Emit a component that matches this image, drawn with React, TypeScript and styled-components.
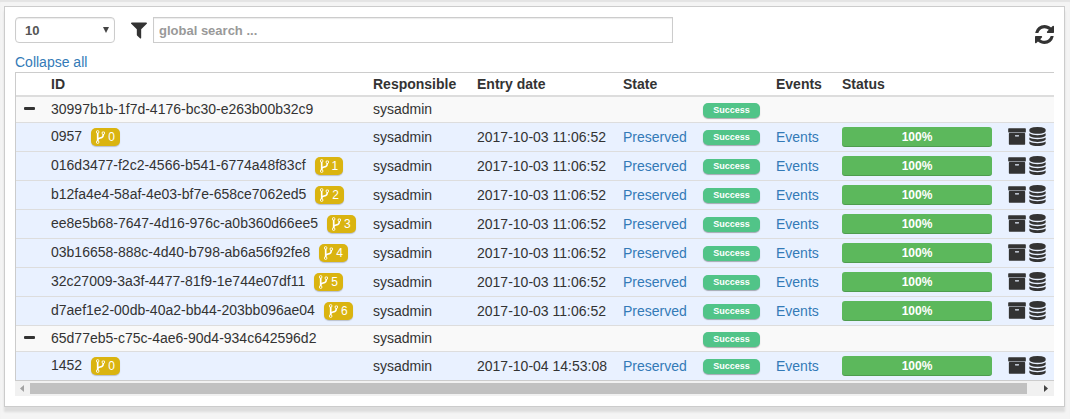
import React, { useState } from 'react';
import styled, { createGlobalStyle } from 'styled-components';

const GlobalStyle = createGlobalStyle`
  *, *::before, *::after { box-sizing: border-box; }
  body {
    margin: 0;
    background: #f4f4f4;
    color: #333;
    font-family: "Liberation Sans", Arial, sans-serif;
    font-size: 14px;
    line-height: 20px;
  }
`;

const Page = styled.div`
  padding: 6px 5px 12px 4px;
  box-shadow: inset 0 2px 1px #e4e4e4;
`;

const Panel = styled.main`
  padding: 10px;
  background: #fff;
  border: 1px solid #ccc;
  box-shadow: 0 5px 2px #ddd;
`;

const Toolbar = styled.div`
  display: flex;
  align-items: flex-start;
  height: 35px;
`;

const SelectBox = styled.div`
  position: relative;
  width: 100px;
  margin-right: 16px;
`;

const PageSize = styled.select`
  appearance: none;
  display: block;
  width: 100%;
  height: 26px;
  padding: 0 9px;
  border: 1px solid #ccc;
  border-radius: 4px;
  background: #fff;
  box-shadow: inset 0 1px 1px rgba(0, 0, 0, 0.08);
  color: #555;
  font: bold 13px "Liberation Sans", Arial, sans-serif;
`;

const SelectArrow = styled.svg`
  position: absolute;
  top: 10px;
  right: 6px;
  width: 6px;
  height: 6px;
  fill: #444;
  pointer-events: none;
`;

const SearchLabel = styled.label`
  width: 22px;
  padding-top: 5px;
`;

const Search = styled.input`
  flex: 0 0 50%;
  height: 26px;
  padding: 0 5px;
  border: 1px solid #ccc;
  border-radius: 0;
  background: #fff;
  box-shadow: inset 0 1px 1px rgba(0, 0, 0, 0.08);
  color: #555;
  font: bold 13px "Liberation Sans", Arial, sans-serif;
  &::placeholder { color: #999; opacity: 1; }
`;

const IconButton = styled.button`
  display: block;
  padding: 0;
  border: 0;
  background: none;
  color: #333;
  cursor: pointer;
`;

const Refresh = styled(IconButton)`
  margin: 8px 0 0 auto;
`;

const Icon = styled.svg`
  display: block;
  fill: currentColor;
`;

const Link = styled.a`
  color: #337ab7;
  text-decoration: none;
`;

const TableFrame = styled.div`
  border: 1px solid #ccc;
  border-right: 0;
  overflow: hidden;
`;

const Table = styled.table`
  width: 100%;
  border-spacing: 0;
  table-layout: fixed;
`;

const HeadCell = styled.th`
  height: 24px;
  padding: 0;
  border-bottom: 2px solid #ddd;
  text-align: left;
  white-space: nowrap;
`;

const Row = styled.tr<{ $group?: boolean }>`
  background: ${(p) => (p.$group ? '#f9f9f9' : '#e9f1ff')};
  & > td {
    height: ${(p) => (p.$group ? 26 : 29)}px;
    padding-bottom: ${(p) => (p.$group ? 2 : 0)}px;
  }
  &:first-child > td { height: 25px; border-top: 0; }
`;

const Cell = styled.td`
  padding: 0;
  border-top: 1px solid #ddd;
  white-space: nowrap;
`;

const IdLine = styled.div`
  display: flex;
  align-items: flex-end;
  gap: 9px;
  padding-bottom: 2px;
`;

const ForkTag = styled.span`
  display: inline-flex;
  align-items: center;
  gap: 3px;
  height: 18px;
  padding: 0 5px;
  border-radius: 5px;
  background: #dab410;
  box-shadow: 0 1px 1px rgba(0, 0, 0, 0.2);
  color: #fff;
  font-size: 12px;
  line-height: 18px;
`;

const SuccessTag = styled.span<{ $group?: boolean }>`
  display: block;
  width: 57px;
  margin-top: ${(p) => (p.$group ? 4 : 0)}px;
  border-radius: 5px;
  background: #51c488;
  box-shadow: 0 1px 1px rgba(0, 0, 0, 0.3);
  color: #fff;
  font-size: 9px;
  font-weight: bold;
  line-height: 15px;
  text-align: center;
`;

const Progress = styled.div`
  width: 150px;
  border-radius: 3px;
  background: #5cb85c;
  box-shadow: inset 0 -1px 0 rgba(0, 0, 0, 0.15);
  color: #fff;
  font-size: 12px;
  font-weight: bold;
  text-align: center;
`;

const Actions = styled.div`
  display: flex;
  align-items: center;
  gap: 3px;
  padding-bottom: 2px;
`;

const ScrollTrack = styled.div`
  display: flex;
  align-items: center;
  height: 15px;
  background: #f1f1f1;
`;

const ScrollArrow = styled(IconButton)<{ $idle?: boolean }>`
  flex: 0 0 15px;
  padding: 0 5px;
  color: ${(p) => (p.$idle ? '#a3a3a3' : '#444')};
`;

const ScrollRail = styled.div`
  flex: 1;
  padding-right: 12px;
`;

const ScrollThumb = styled.div`
  height: 11px;
  background: #c1c1c1;
`;

const FILTER =
  'M1595 295q17 41-14 70l-493 493v742q0 42-39 59-13 5-25 5-27 0-45-19l-256-256q-19-19-19-45v-486l-493-493q-31-29-14-70 17-39 59-39h1280q42 0 59 39z';
const REFRESH =
  'M1639 1056q0 5-1 7-64 268-268 434.5t-478 166.5q-146 0-282.5-55t-243.5-157l-129 129q-19 19-45 19t-45-19-19-45v-448q0-26 19-45t45-19h448q26 0 45 19t19 45-19 45l-137 137q71 66 161 102t187 36q134 0 250-65t186-179q11-17 53-117 8-23 30-23h192q13 0 22.5 9.5t9.5 22.5zm25-800v448q0 26-19 45t-45 19h-448q-26 0-45-19t-19-45 19-45l138-138q-148-137-349-137-134 0-250 65t-186 179q-11 17-53 117-8 23-30 23h-199q-13 0-22.5-9.5t-9.5-22.5v-7q65-268 270-434.5t480-166.5q146 0 284 55.5t245 156.5l130-129q19-19 45-19t45 19 19 45z';
const ARCHIVE =
  'M1088 832q0-26-19-45t-45-19h-256q-26 0-45 19t-19 45 19 45 45 19h256q26 0 45-19t19-45zm576-192v960q0 26-19 45t-45 19h-1408q-26 0-45-19t-19-45v-960q0-26 19-45t45-19h1408q26 0 45 19t19 45zm64-448v256q0 26-19 45t-45 19h-1536q-26 0-45-19t-19-45v-256q0-26 19-45t45-19h1536q26 0 45 19t19 45z';
const DATABASE =
  'M896 768q237 0 443-43t325-127v170q0 69-103 128t-280 93.5-385 34.5-385-34.5-280-93.5-103-128v-170q119 84 325 127t443 43zm0 768q237 0 443-43t325-127v170q0 69-103 128t-280 93.5-385 34.5-385-34.5-280-93.5-103-128v-170q119 84 325 127t443 43zm0-384q237 0 443-43t325-127v170q0 69-103 128t-280 93.5-385 34.5-385-34.5-280-93.5-103-128v-170q119 84 325 127t443 43zm0-1152q208 0 385 34.5t280 93.5 103 128v128q0 69-103 128t-280 93.5-385 34.5-385-34.5-280-93.5-103-128v-128q0-69 103-128t280-93.5 385-34.5z';
const FORK =
  'M672 1472q0-40-28-68t-68-28-68 28-28 68 28 68 68 28 68-28 28-68zm0-1152q0-40-28-68t-68-28-68 28-28 68 28 68 68 28 68-28 28-68zm640 128q0-40-28-68t-68-28-68 28-28 68 28 68 68 28 68-28 28-68zm96 0q0 52-26 96.5t-70 69.5q-2 287-226 414-67 38-203 81-128 40-169.5 71t-41.5 100v26q44 25 70 69.5t26 96.5q0 80-56 136t-136 56-136-56-56-136q0-52 26-96.5t70-69.5v-820q-44-25-70-69.5t-26-96.5q0-80 56-136t136-56 136 56 56 136q0 52-26 96.5t-70 69.5v497q54-26 154-57 55-17 87.5-29.5t70.5-31 59-39.5 40.5-51 28-69.5 8.5-91.5q-44-25-70-69.5t-26-96.5q0-80 56-136t136-56 136 56 56 136z';

type Child = { id: string; date: string };
type Group = { id: string; children: Child[] };

const DAY = '2017-10-03 11:06:52';

const groups: Group[] = [
  {
    id: '30997b1b-1f7d-4176-bc30-e263b00b32c9',
    children: [
      { id: '0957', date: DAY },
      { id: '016d3477-f2c2-4566-b541-6774a48f83cf', date: DAY },
      { id: 'b12fa4e4-58af-4e03-bf7e-658ce7062ed5', date: DAY },
      { id: 'ee8e5b68-7647-4d16-976c-a0b360d66ee5', date: DAY },
      { id: '03b16658-888c-4d40-b798-ab6a56f92fe8', date: DAY },
      { id: '32c27009-3a3f-4477-81f9-1e744e07df11', date: DAY },
      { id: 'd7aef1e2-00db-40a2-bb44-203bb096ae04', date: DAY },
    ],
  },
  {
    id: '65d77eb5-c75c-4ae6-90d4-934c642596d2',
    children: [{ id: '1452', date: '2017-10-04 14:53:08' }],
  },
];

const columnWidths = [35, 322, 104, 146, 80, 73, 66, 166];

function ChildRow({ item, index }: { item: Child; index: number }) {
  return (
    <Row>
      <Cell />
      <Cell>
        <IdLine>
          {item.id}
          <ForkTag>
            <Icon width="9" height="14" viewBox="384 128 1024 1536">
              <path d={FORK} />
            </Icon>
            {index}
          </ForkTag>
        </IdLine>
      </Cell>
      <Cell>sysadmin</Cell>
      <Cell>{item.date}</Cell>
      <Cell><Link href="#state">Preserved</Link></Cell>
      <Cell><SuccessTag>Success</SuccessTag></Cell>
      <Cell><Link href="#events">Events</Link></Cell>
      <Cell><Progress>100%</Progress></Cell>
      <Cell>
        <Actions>
          <IconButton aria-label="Archive">
            <Icon width="18" height="19" viewBox="64 0 1664 1792"><path d={ARCHIVE} /></Icon>
          </IconButton>
          <IconButton aria-label="Storage">
            <Icon width="17" height="19" viewBox="128 0 1536 1792"><path d={DATABASE} /></Icon>
          </IconButton>
        </Actions>
      </Cell>
    </Row>
  );
}

export default function App() {
  const [query, setQuery] = useState('');
  return (
    <Page>
      <GlobalStyle />
      <Panel>
        <Toolbar>
          <SelectBox>
            <PageSize aria-label="Rows per page" defaultValue="10">
              <option>10</option>
              <option>25</option>
              <option>50</option>
            </PageSize>
            <SelectArrow viewBox="0 0 6 6"><path d="M0 0h6L3 6z" /></SelectArrow>
          </SelectBox>
          <SearchLabel htmlFor="search" aria-label="Filter">
            <Icon width="16" height="17" viewBox="192 224 1408 1472"><path d={FILTER} /></Icon>
          </SearchLabel>
          <Search
            id="search"
            placeholder="global search ..."
            value={query}
            onChange={(e) => setQuery(e.target.value)}
          />
          <Refresh aria-label="Refresh">
            <Icon width="19" height="19" viewBox="128 128 1536 1536"><path d={REFRESH} /></Icon>
          </Refresh>
        </Toolbar>
        <Link href="#collapse">Collapse all</Link>
        <TableFrame>
          <Table>
            <colgroup>
              {columnWidths.map((w, i) => <col key={i} width={w} />)}
              <col />
            </colgroup>
            <thead>
              <tr>
                <HeadCell />
                <HeadCell>ID</HeadCell>
                <HeadCell>Responsible</HeadCell>
                <HeadCell>Entry date</HeadCell>
                <HeadCell>State</HeadCell>
                <HeadCell />
                <HeadCell>Events</HeadCell>
                <HeadCell>Status</HeadCell>
                <HeadCell />
              </tr>
            </thead>
            <tbody>
              {groups.map((g) => (
                <React.Fragment key={g.id}>
                  <Row $group>
                    <Cell>
                      <IconButton aria-label="Collapse group">
                        <Icon width="27" height="4" viewBox="0 0 27 4">
                          <rect x="8" width="11" height="3" rx="1" />
                        </Icon>
                      </IconButton>
                    </Cell>
                    <Cell>{g.id}</Cell>
                    <Cell>sysadmin</Cell>
                    <Cell />
                    <Cell />
                    <Cell><SuccessTag $group>Success</SuccessTag></Cell>
                    <Cell />
                    <Cell />
                    <Cell />
                  </Row>
                  {g.children.map((c, i) => <ChildRow key={c.id} item={c} index={i} />)}
                </React.Fragment>
              ))}
            </tbody>
          </Table>
        </TableFrame>
        <ScrollTrack>
          <ScrollArrow $idle aria-label="Scroll left">
            <Icon width="4" height="7" viewBox="0 0 8 14"><path d="M8 0v14L0 7z" /></Icon>
          </ScrollArrow>
          <ScrollRail><ScrollThumb /></ScrollRail>
          <ScrollArrow aria-label="Scroll right">
            <Icon width="4" height="7" viewBox="0 0 8 14"><path d="M0 0v14l8-7z" /></Icon>
          </ScrollArrow>
        </ScrollTrack>
      </Panel>
    </Page>
  );
}
